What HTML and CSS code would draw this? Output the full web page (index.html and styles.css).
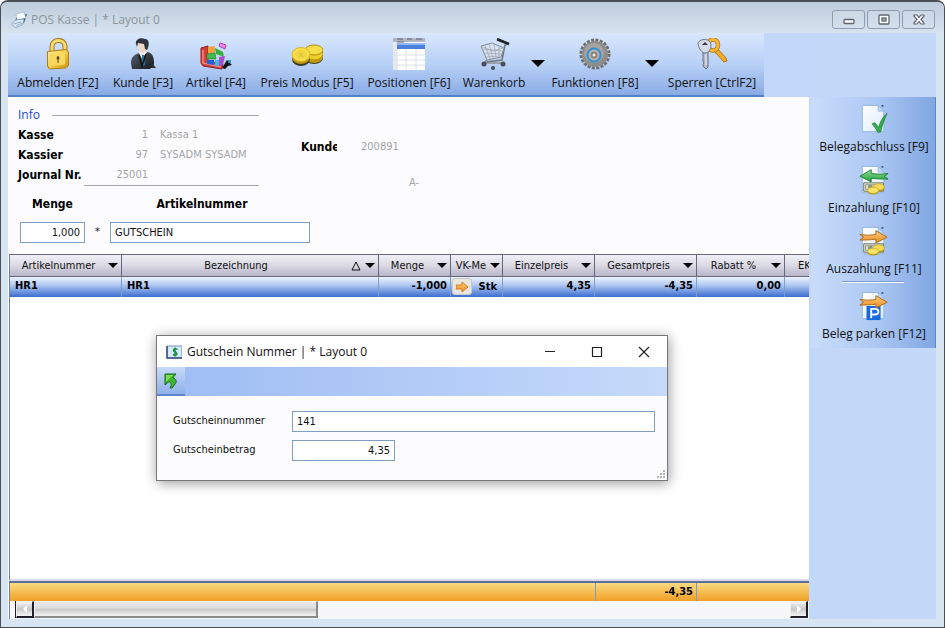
FILE: index.html
```html
<!DOCTYPE html>
<html lang="de">
<head>
<meta charset="utf-8">
<title>POS Kasse</title>
<link rel="stylesheet" href="styles.css">
</head>
<body>
<svg class="defs" aria-hidden="true">
  <defs>
    <linearGradient id="gold" x1="0" y1="0" x2="1" y2="1"><stop offset="0" stop-color="#fff0a0"/><stop offset=".5" stop-color="#f6cf45"/><stop offset="1" stop-color="#c98d12"/></linearGradient>
    <linearGradient id="orange" x1="0" y1="0" x2="0" y2="1"><stop offset="0" stop-color="#ffcf80"/><stop offset="1" stop-color="#e88a1c"/></linearGradient>
    <linearGradient id="green" x1="0" y1="0" x2="0" y2="1"><stop offset="0" stop-color="#8ee08c"/><stop offset="1" stop-color="#26a03e"/></linearGradient>
    <linearGradient id="paper" x1="0" y1="0" x2="1" y2="1"><stop offset="0" stop-color="#fff"/><stop offset="1" stop-color="#dcebfa"/></linearGradient>
    <linearGradient id="suit" x1="0" y1="0" x2="1" y2="1"><stop offset="0" stop-color="#5a5f68"/><stop offset="1" stop-color="#15181e"/></linearGradient>
    <symbol id="sheet" viewBox="0 0 32 32">
      <path d="M3.500 1.500h17l6 6v22h-23z" fill="url(#paper)" stroke="#8fb4de"/>
      <path d="M20.500 1.500v6h6z" fill="#c4dbf5" stroke="#8fb4de"/>
      <path d="M24 1h2v2h-2z" fill="#3f5674"/>
    </symbol>
    <symbol id="money" viewBox="0 0 32 32">
      <path d="M5 19h21v9H5z" fill="#dde0cf" stroke="#6c7365"/>
      <path d="M7 21h17v5H7z" fill="none" stroke="#929985"/>
      <circle cx="12" cy="23.500" r="2.500" fill="#8c9580"/>
      <ellipse cx="21" cy="25" rx="6" ry="3.500" fill="#b5901b"/>
      <ellipse cx="21" cy="23.500" rx="6" ry="3.500" fill="#f4dc55" stroke="#c5a021" stroke-width=".7"/>
      <ellipse cx="15" cy="28.500" rx="6" ry="3" fill="#b5901b"/>
      <ellipse cx="15" cy="27" rx="6" ry="3.300" fill="#f8e467" stroke="#c5a021" stroke-width=".7"/>
    </symbol>
    <symbol id="right" viewBox="0 0 32 32">
      <path d="M1 9c6 1 12 1 17 0V5l12 7-12 6v-4c-6 1-12 1-17 1l4-3z" fill="url(#orange)" stroke="#ad6815"/>
    </symbol>
  </defs>
</svg>
<main class="window">
  <header class="titlebar">
    <svg class="app-icon" viewBox="0 0 18 18"><path d="M6 7l11-4-3 9-9 2z" fill="#21466f"/><path d="M6 3l8-2 2 6-9 2z" fill="#f8fbff" stroke="#8ea9c3" stroke-width=".6"/><path d="M1 13l5-4 8-1-1 5-7 4z" fill="#dceaf6" stroke="#7d9bbb" stroke-width=".7"/><path d="M3 13l8-2M6 15l6-3" stroke="#7f9cbd" stroke-width=".8"/></svg>
    <h1>POS Kasse | * Layout 0</h1>
    <div class="frame-buttons">
      <button aria-label="Minimieren"><svg viewBox="0 0 14 12"><rect x="2" y="5.500" width="10" height="4" rx="1" fill="#fff" stroke="#60646f" stroke-width="1.300"/></svg></button>
      <button aria-label="Maximieren"><svg viewBox="0 0 14 12"><rect x="2" y="1" width="10" height="9" rx="1" fill="#fff" stroke="#60646f" stroke-width="1.300"/><rect x="5" y="4" width="4" height="3" fill="#aab7ca" stroke="#60646f" stroke-width="1.300"/></svg></button>
      <button aria-label="Schließen"><svg viewBox="0 0 14 12"><path d="M2 1h3l2 2.500L9 1h3v1L9 5.500 12 9v1H9L7 7.500 5 10H2V9l3-3.500L2 2z" fill="#fff" stroke="#60646f" stroke-width="1.200"/></svg></button>
    </div>
  </header>

  <div class="client">
    <nav class="toolbar">
      <button><svg class="icon" viewBox="0 0 32 32"><path d="M10 15V8.500C10 1 22 0 23 8v6" fill="none" stroke="#a3771a" stroke-width="5"/><path d="M10 15V8.500C10 1 22 0 23 8v6" fill="none" stroke="#f7dc72" stroke-width="3"/><path d="M5.500 13.500l19-2 2 3v13l-3 2.500-16 1-2-3z" fill="url(#gold)" stroke="#b07d16"/><path d="M8 16l15-1.500v12L8 28z" fill="#f9d75c"/><circle cx="16" cy="20" r="1.500" fill="#5c451a"/><path d="M16 18v7" stroke="#5c451a"/></svg>Abmelden [F2]</button>
      <button><svg class="icon" viewBox="0 0 32 32"><path d="M21 30h8l-3-4z" fill="#333" /><path d="M4 25c0-6 3-8 8-10l9-1c5 2 6 5 6 12l-4 5H5z" fill="url(#suit)"/><path d="M12 15l3 6 5-7-3-3h-4z" fill="#f7f7f7"/><path d="M15 17l2 0 1 10-3 1z" fill="#2878ad"/><path d="M11 5c0-3 9-4 9 1 0 6-1 9-4 9s-5-4-5-10z" fill="#f0d8c5"/><path d="M9 6c-1-5 5-7 9-5 4 0 5 5 2 11l-2-1-1-5-6-1-1 4z" fill="#30353d"/><path d="M12 17l3 11 4-12" fill="none" stroke="#101217" stroke-width="1.500"/></svg>Kunde [F3]</button>
      <button><svg class="icon" viewBox="0 0 32 32"><path d="M22 30l5-8 5 5-4 1-3 3z" fill="#151515"/><path d="M1 10l7-2v15l15 3-1 5-19-3-2-3z" fill="#d23c35" stroke="#931e23"/><path d="M3 12v13l18 4" fill="none" stroke="#f08d80" stroke-width="1.500"/><path d="M8 9l7-1v7H8z" fill="#f5a13e"/><path d="M7 16l8-1 1 6H7z" fill="#44b94d" stroke="#1c7b2a" stroke-width=".6"/><path d="M7 22h7v5l-7-1z" fill="#2c5eda"/><path d="M15 22h5v5l-5 1z" fill="#39bcf0"/><path d="M15 10l8 4 1 5-8-3z" fill="#36ad3e"/><path d="M19 19l6-1-2 9-4 1z" fill="#a64ed0"/><path d="M20 5l6 2-1 4-6-3z" fill="#e589ed" stroke="#b43eb6"/><path d="M28 22h3v3h-3z" fill="#2e95cc"/></svg>Artikel [F4]</button>
      <button><svg class="icon" viewBox="0 0 32 32"><ellipse cx="23" cy="20" rx="9" ry="6" fill="#3c3b24"/><ellipse cx="23" cy="19" rx="9" ry="6" fill="#c49d12"/><ellipse cx="23" cy="16" rx="9" ry="6" fill="#efcf28" stroke="#b48c0a"/><ellipse cx="23" cy="12" rx="9" ry="5" fill="#f8df47" stroke="#b48c0a"/><ellipse cx="10" cy="21" rx="9" ry="7" fill="#3c3b24"/><ellipse cx="10" cy="19" rx="9" ry="7" fill="#bd960e"/><ellipse cx="10" cy="16.500" rx="9" ry="7" fill="#f8df47" stroke="#d9b527"/><ellipse cx="10" cy="16.500" rx="6" ry="4.500" fill="#f2d640"/><path d="M8 14l4 5m0-5l-4 5" stroke="#d9bb37"/></svg>Preis Modus [F5]</button>
      <button><svg class="icon" viewBox="0 0 32 32"><path d="M0 0h32v32H0z" fill="#fff"/><path d="M0 0h32v4H0z" fill="#b1b5c0"/><path d="M4 1h6m4 0h5m4 0h6M4 4h7" stroke="#596380"/><path d="M4 5h28v6H4z" fill="#4b80df"/><path d="M4 5h28v2H4z" fill="#90b5f1"/><path d="M0 4h4v28H0z" fill="#e7e9f0"/><path d="M4 11v21M13 11v21M23 11v21M0 17h32M0 22h32M0 27h32" stroke="#dde0ea"/></svg>Positionen [F6]</button>
      <button><svg class="icon" viewBox="0 0 32 32"><path d="M19 2l11 4-3 1-3 15-16 2" fill="none" stroke="#71757c" stroke-width="1.500"/><path d="M19 1l12 5" stroke="#202329" stroke-width="2.500"/><path d="M3 8l11-3 12 5-3 9-14 3z" fill="#d9e3ed" fill-opacity=".75" stroke="#858c96"/><path d="M4 11l20 2M6 15l18 1M7 19l16-1M7 7l5 14M11 6l4 14M16 6l2 13M21 8v10M3 8l11 5 12-3" fill="none" stroke="#a3abb5" stroke-width=".8"/><path d="M9 22l-3 3h19" fill="none" stroke="#8c9199" stroke-width="1.500"/><circle cx="6" cy="26" r="2.500" fill="#4a4e55"/><circle cx="15" cy="30" r="2" fill="#4a4e55"/><circle cx="25" cy="26" r="2.500" fill="#4a4e55"/></svg>Warenkorb</button>
      <button class="drop" aria-label="Warenkorb Menü"></button>
      <button><svg class="icon" viewBox="0 0 32 32"><circle cx="16" cy="16" r="14" fill="none" stroke="#6f6e6c" stroke-width="3" stroke-dasharray="3 1.400"/><circle cx="16" cy="16" r="13" fill="#8e8d8b"/><circle cx="15" cy="15" r="10" fill="#a5a3a0"/><circle cx="15" cy="17" r="6.500" fill="#b9b5ad" stroke="#2f8fd3" stroke-width="2"/><circle cx="15" cy="17" r="3.500" fill="#88847c"/><circle cx="15" cy="17" r="1.500" fill="#f3f0e8"/></svg>Funktionen [F8]</button>
      <button class="drop" aria-label="Funktionen Menü"></button>
      <button><svg class="icon" viewBox="0 0 32 32"><path d="M17 12l11 12 3-1-1-3-10-11z" fill="#f5ac28" stroke="#b97310"/><ellipse cx="17" cy="7" rx="5" ry="5.500" fill="none" stroke="#b97310" stroke-width="4.500"/><ellipse cx="17" cy="7" rx="5" ry="5.500" fill="none" stroke="#f8b735" stroke-width="3"/><path d="M7 13h5v16l-2 2-3-3v-2l1-1-1-2z" fill="#b4bac5" stroke="#687080"/><path d="M2 5c2-5 13-5 13 2 0 5-3 8-6 8s-7-5-7-10z" fill="#d6dbe8" stroke="#717a8d"/><path d="M6 7l3-3 3 3z" fill="#3a3d45"/><path d="M10 16v11" stroke="#eef2f8"/></svg>Sperren [CtrlF2]</button>
    </nav>

    <div class="body">
      <section class="content">
        <div class="form">
          <section class="info">
            <h2>Info</h2>
            <dl>
              <dt>Kasse</dt><dd class="num">1</dd><dd>Kassa 1</dd>
              <dt>Kassier</dt><dd class="num">97</dd><dd>SYSADM SYSADM</dd>
              <dt>Journal Nr.</dt><dd class="num">25001</dd><dd></dd>
            </dl>
          </section>
          <section class="customer">
            <b>Kunde</b><span>200891</span>
            <span class="grade">A-</span>
          </section>
          <div class="entry">
            <label for="menge">Menge</label><label class="article" for="artikel">Artikelnummer</label>
            <input id="menge" class="num" value="1,000"><span>*</span><input id="artikel" value="GUTSCHEIN">
          </div>
        </div>

        <div class="grid">
          <table>
            <colgroup><col class="c-art"><col class="c-bez"><col class="c-menge"><col class="c-vk"><col class="c-einzel"><col class="c-gesamt"><col class="c-rabatt"><col class="c-ek"></colgroup>
            <thead><tr>
              <th><div><span>Artikelnummer</span><i class="tri"></i></div></th>
              <th><div><span>Bezeichnung</span><svg class="sort" viewBox="0 0 10 10"><path d="M5 1l4 8H1z" fill="none" stroke="#111"/></svg><i class="tri"></i></div></th>
              <th><div><span>Menge</span><i class="tri"></i></div></th>
              <th><div class="tight"><span>VK-Me</span><i class="tri"></i></div></th>
              <th><div><span>Einzelpreis</span><i class="tri"></i></div></th>
              <th><div><span>Gesamtpreis</span><i class="tri"></i></div></th>
              <th><div><span>Rabatt %</span><i class="tri"></i></div></th>
              <th class="ek">EK</th>
            </tr></thead>
            <tbody><tr>
              <td>HR1</td><td>HR1</td><td class="num">-1,000</td>
              <td><div class="unit"><button aria-label="Einheit wählen"><svg viewBox="0 0 14 12"><path d="M1 4h6V1l6 5-6 5V8H1l1-2z" fill="url(#orange)" stroke="#d08320"/></svg></button>Stk</div></td>
              <td class="num">4,35</td><td class="num">-4,35</td><td class="num">0,00</td><td></td>
            </tr></tbody>
          </table>
        </div>
        <div class="totals"><span></span><output>-4,35</output><span></span></div>
        <div class="scroll">
          <button class="arrow left" aria-label="Nach links"></button>
          <div class="thumb"></div>
          <button class="arrow right" aria-label="Nach rechts"></button>
        </div>
      </section>

      <aside class="side">
        <nav class="actions">
          <button><svg class="icon" viewBox="0 0 32 32"><use href="#sheet"/><path d="M14 21l3-1 4 5c2-7 4-11 9-15-3 6-5 12-7 20h-3c-2-4-4-6-6-9z" fill="#34ad4c" stroke="#198339" stroke-width=".8"/></svg>Belegabschluss [F9]</button>
          <button><svg class="icon" viewBox="0 0 32 32"><use href="#sheet"/><path d="M31 9c-6 1-13 1-18 0V5L1 12l12 6v-4c6 1 12 1 18 1l-4-3z" fill="url(#green)" stroke="#168037"/><use href="#money"/></svg>Einzahlung [F10]</button>
          <button><svg class="icon" viewBox="0 0 32 32"><use href="#sheet"/><use href="#right"/><use href="#money"/></svg>Auszahlung [F11]</button>
          <hr>
          <button><svg class="icon" viewBox="0 0 32 32"><use href="#sheet"/><path d="M8 16h15v15H8z" fill="#1769df"/><path d="M13 29V19h4c5 0 5 6 0 6h-4" fill="none" stroke="#fff" stroke-width="2"/><use href="#right"/></svg>Beleg parken [F12]</button>
        </nav>
      </aside>
    </div>
  </div>

  <section class="dialog" role="dialog" aria-labelledby="dialog-title">
    <header class="dialog-title">
      <svg class="bill" viewBox="0 0 16 14"><path d="M1 1h15v12H1z" fill="#d6e8fb" stroke="#6f94c4"/><path d="M1 1v12h15" fill="none" stroke="#364d7c" stroke-width="1.500"/><path d="M11.500 4.500C8 2 6 6 9 7s2 5-2 2.500M9 2.500v9" fill="none" stroke="#119438" stroke-width="1.500"/></svg>
      <h2 id="dialog-title">Gutschein Nummer | * Layout 0</h2>
      <button aria-label="Minimieren"><svg viewBox="0 0 12 12"><path d="M1 5.500h10" stroke="#222"/></svg></button>
      <button aria-label="Maximieren"><svg viewBox="0 0 12 12"><path d="M1.500 1.500h9v9h-9z" fill="none" stroke="#222" stroke-width="1.200"/></svg></button>
      <button aria-label="Schließen"><svg viewBox="0 0 12 12"><path d="M1 1l10 10M11 1L1 11" stroke="#222" stroke-width="1.200"/></svg></button>
    </header>
    <div class="dialog-bar"><button aria-label="Zurück"><svg viewBox="0 0 16 16"><path d="M2 1h11l-3 3.500c3 1.500 4 3.500 2.500 6L9 15H7c2-3.500 1.500-5-1-6.500L2 12z" fill="#3fb52c" stroke="#126f1b"/><path d="M3 2h7L3 9z" fill="#7edb55"/></svg></button></div>
    <div class="dialog-form">
      <label for="gnr">Gutscheinnummer</label><input id="gnr" value="141">
      <label for="gbetrag">Gutscheinbetrag</label><input id="gbetrag" class="num amount" value="4,35">
    </div>
    <svg class="grip" viewBox="0 0 9 9"><path d="M6 0h2v2H6zM3 3h2v2H3zM6 3h2v2H6zM0 6h2v2H0zM3 6h2v2H3zM6 6h2v2H6z" fill="#b5b5b5"/></svg>
  </section>
</main>
</body>
</html>
```
FILE: styles.css
```css
* { box-sizing: border-box; }

body {
  margin: 0;
  background: #fff;
  color: #111;
  font: 11px/20px "DejaVu Sans Condensed", "DejaVu Sans", sans-serif;
}

h1, h2, dl, dd { margin: 0; font-weight: normal; }

button {
  padding: 0;
  border: 0;
  background: none;
  color: inherit;
  font: inherit;
}

.defs { position: absolute; width: 0; height: 0; }

.window {
  position: relative;
  display: flex;
  flex-direction: column;
  min-height: 100vh;
  padding: 0 8px 8px 7px;
  border: 1px solid #4b4e53;
  border-top-width: 2px;
  border-radius: 8px 8px 0 0;
  background: #d7e4f1;
}

.titlebar {
  display: flex;
  align-items: center;
  height: 31px;
  margin: 0 -8px 0 -7px;
  padding: 4px 9px 0 9px;
  border-radius: 6px 6px 0 0;
  background: linear-gradient(#bdccdc, #d7e3ef);
  font-family: "Open Sans", sans-serif;
}
.titlebar h1 { flex: 1; color: #8d949c; font-size: 12px; line-height: 20px; }
.app-icon { width: 18px; height: 18px; margin-right: 3px; }
.frame-buttons { display: flex; gap: 2px; }
.frame-buttons button {
  display: grid;
  place-items: center;
  width: 33px;
  height: 19px;
  border: 1px solid #909db0;
  border-radius: 3px;
  background: linear-gradient(#cbd8e6, #d3dfeb);
}
.frame-buttons svg { width: 14px; height: 12px; }

.client {
  flex: 1;
  display: flex;
  flex-direction: column;
  background: linear-gradient(90deg, #b7d2f8, #c4d8f9);
}

.toolbar {
  display: grid;
  grid-template-columns: 100px 70px 76px 106px 98px 72px 16px 98px 16px 104px;
  width: max-content;
  height: 64px;
  border-bottom: 2px solid #557fc7;
  background: linear-gradient(#d9e7fd, #b8d1f7 50%, #88aae4);
}
.toolbar button,
.actions button {
  display: flex;
  flex-direction: column;
  align-items: center;
  font: 12px/20px "Open Sans", sans-serif;
  white-space: nowrap;
}
.toolbar button { padding-top: 5px; }
.icon { width: 32px; height: 32px; flex: none; }
.toolbar .icon { margin-bottom: 3px; }
.toolbar .drop { padding-top: 27px; }
.drop::before {
  content: "";
  border: 7px solid transparent;
  border-top-color: #000;
  border-bottom: 0;
}

.body { flex: 1; display: flex; }
.content {
  flex: 1;
  min-width: 0;
  display: flex;
  flex-direction: column;
  background: #fcfcfe;
}

.form {
  display: grid;
  grid-template-columns: 251px 1fr;
  align-content: start;
  height: 157px;
  padding: 8px 0 0 10px;
}
.info { width: 241px; }
.info h2 {
  display: flex;
  align-items: center;
  gap: 12px;
  color: #1c48d8;
  font: 12px/20px "Open Sans", sans-serif;
}
.info h2::after { content: ""; flex: 1; border-top: 1px solid #aaa5a5; }
.info dl { display: grid; grid-template-columns: 80px 50px 1fr; }
dt, .customer b, .entry label { color: #000; font-size: 12px; font-weight: bold; white-space: nowrap; }
dd { padding-left: 12px; color: #a4a4a8; white-space: nowrap; }
dd.num { padding-left: 0; }
.info::after { content: ""; display: block; margin-left: 66px; border-top: 1px solid #aaa5a5; }
.num { text-align: right; }
.customer {
  display: grid;
  grid-template-columns: 36px 1fr;
  column-gap: 24px;
  row-gap: 16px;
  align-content: start;
  height: 81px;
  padding: 32px 0 0 32px;
  color: #a4a4a8;
}
.customer b { overflow: hidden; }
.grade { grid-column: 2; padding-left: 48px; }

.entry {
  grid-column: 1 / -1;
  display: grid;
  grid-template-columns: 65px 25px 200px;
  row-gap: 8px;
  margin-top: 8px;
  padding-left: 2px;
  text-align: center;
}
.entry .article { grid-column: 3; padding-right: 16px; }
input {
  width: 100%;
  min-width: 0;
  height: 21px;
  padding: 0 4px;
  border: 1px solid #7f9fc2;
  border-radius: 0;
  background: #fff;
  color: #111;
  font: inherit;
}

.grid {
  flex: 1;
  overflow: hidden;
  margin-left: 1px;
  border-left: 1px solid #70809a;
  border-bottom: 2px solid #dcdce6;
  background: #fff;
}
table { width: 818px; table-layout: fixed; border-collapse: separate; border-spacing: 0; }
.c-art { width: 112px; }
.c-bez { width: 257px; }
.c-menge { width: 72px; }
.c-vk { width: 52px; }
.c-einzel { width: 92px; }
.c-gesamt { width: 102px; }
.c-rabatt { width: 88px; }
.c-ek { width: 43px; }
th {
  height: 23px;
  padding: 0 3px;
  border: solid #67677a;
  border-width: 1px 1px 1px 0;
  background: linear-gradient(#f1f1f6, #dad9e4 50%, #b7b4c8);
  font-weight: normal;
}
th div { display: flex; align-items: center; gap: 4px; }
th span { flex: 1; }
th .tight { gap: 1px; margin: 0 -1px; }
th.ek { padding-left: 13px; text-align: left; }
.tri { border: 5px solid transparent; border-top-color: #000; border-bottom: 0; }
.sort { width: 10px; height: 10px; }
td {
  height: 20px;
  padding: 0 3px 2px 5px;
  border-right: 1px solid #7c9cc9;
  background: linear-gradient(#edf3fd, #b1c8f2 40%, #3b6dd0);
  color: #000;
  font-weight: bold;
  line-height: 18px;
}
.unit { display: flex; justify-content: space-between; margin: 0 2px -2px -4px; }
.unit button {
  display: grid;
  place-items: center;
  width: 20px;
  height: 17px;
  border: 1px solid #c8c8c8;
  border-radius: 3px;
  background: #e9e6e2;
}
.unit svg { width: 14px; height: 12px; }

.totals {
  display: grid;
  grid-template-columns: 585px 102px 1fr;
  height: 20px;
  margin-left: 1px;
  border-top: 2px solid #5a6d9c;
  border-left: 1px solid #70809a;
  background: linear-gradient(#fadb82, #f5bd52 50%, #f0a026);
  line-height: 18px;
}
.totals output {
  padding-right: 3px;
  border: solid #7c9cc9;
  border-width: 0 1px;
  color: #000;
  font-weight: bold;
  text-align: right;
}

.scroll {
  display: flex;
  height: 18px;
  margin-left: 1px;
  padding-left: 6px;
  border-left: 1px solid #70809a;
  background: #f7f7fa;
}
.arrow, .thumb {
  height: 17px;
  border: solid;
  border-width: 1px 2px 2px 1px;
  background: linear-gradient(#f4f4f4, #c8c8c8 50%, #f4f4f4);
}
.arrow { display: grid; place-items: center; width: 18px; border-color: #eee #20202c #20202c #eee; }
.left { box-shadow: -1px 0 #20202c; }
.thumb { width: 284px; border-color: #f4f4f4 #8a8a8a #8a8a8a #f4f4f4; background: linear-gradient(#e8e8e8, #ddd 45%, #c8c8c8 50%, #f4f4f4); }
.right { margin-left: auto; margin-right: 1px; }
.arrow::before { content: ""; border: 4px solid transparent; }
.left::before { border-right-color: #fff; border-left: 0; }
.right::before { border-left-color: #fff; border-right: 0; }

.side { flex: 0 0 127px; padding-left: 2px; }
.actions {
  display: flex;
  flex-direction: column;
  padding: 7px 0 2px;
  border-right: 1px solid #5f86cc;
  background: linear-gradient(90deg, #c9dcfa, #aec9f4 50%, #80a6e2);
}
.actions .icon { width: 30px; height: 30px; margin-bottom: 3px; }
.actions button { height: 61px; padding-left: 2px; }
.actions button:nth-of-type(3),
.actions button:last-child { height: 55px; }
.actions hr {
  width: 62px;
  height: 2px;
  margin: 0 auto 8px;
  border: 0;
  border-top: 1px solid #7c9ad0;
  background: #fff;
}

.dialog {
  position: absolute;
  top: 333px;
  left: 155px;
  width: 512px;
  border: 1px solid #777;
  background: #fcfcfe;
  box-shadow: 1px 2px 12px #0006;
}
.dialog-title { display: flex; align-items: center; height: 31px; padding-left: 9px; background: #fff; }
.dialog-title h2 { flex: 1; font: 12px/20px "Open Sans", sans-serif; }
.bill { width: 16px; height: 14px; margin-right: 5px; }
.dialog-title button { display: grid; place-items: center; width: 47px; height: 30px; }
.dialog-title button svg { width: 12px; height: 12px; }
.dialog-bar { height: 29px; background: linear-gradient(90deg, #9dbcf3, #c6dafa); }
.dialog-bar button {
  display: grid;
  place-items: center;
  width: 28px;
  height: 29px;
  border-bottom: 2px solid #5f86cc;
  background: linear-gradient(#c8dafa, #8fb0e8);
}
.dialog-bar svg { width: 16px; height: 16px; }
.dialog-form {
  display: grid;
  grid-template-columns: 119px 1fr;
  row-gap: 8px;
  padding: 15px 12px 19px 16px;
}
.dialog-form .amount { width: 103px; }
.grip { position: absolute; right: 1px; bottom: 1px; width: 9px; height: 9px; }
```
